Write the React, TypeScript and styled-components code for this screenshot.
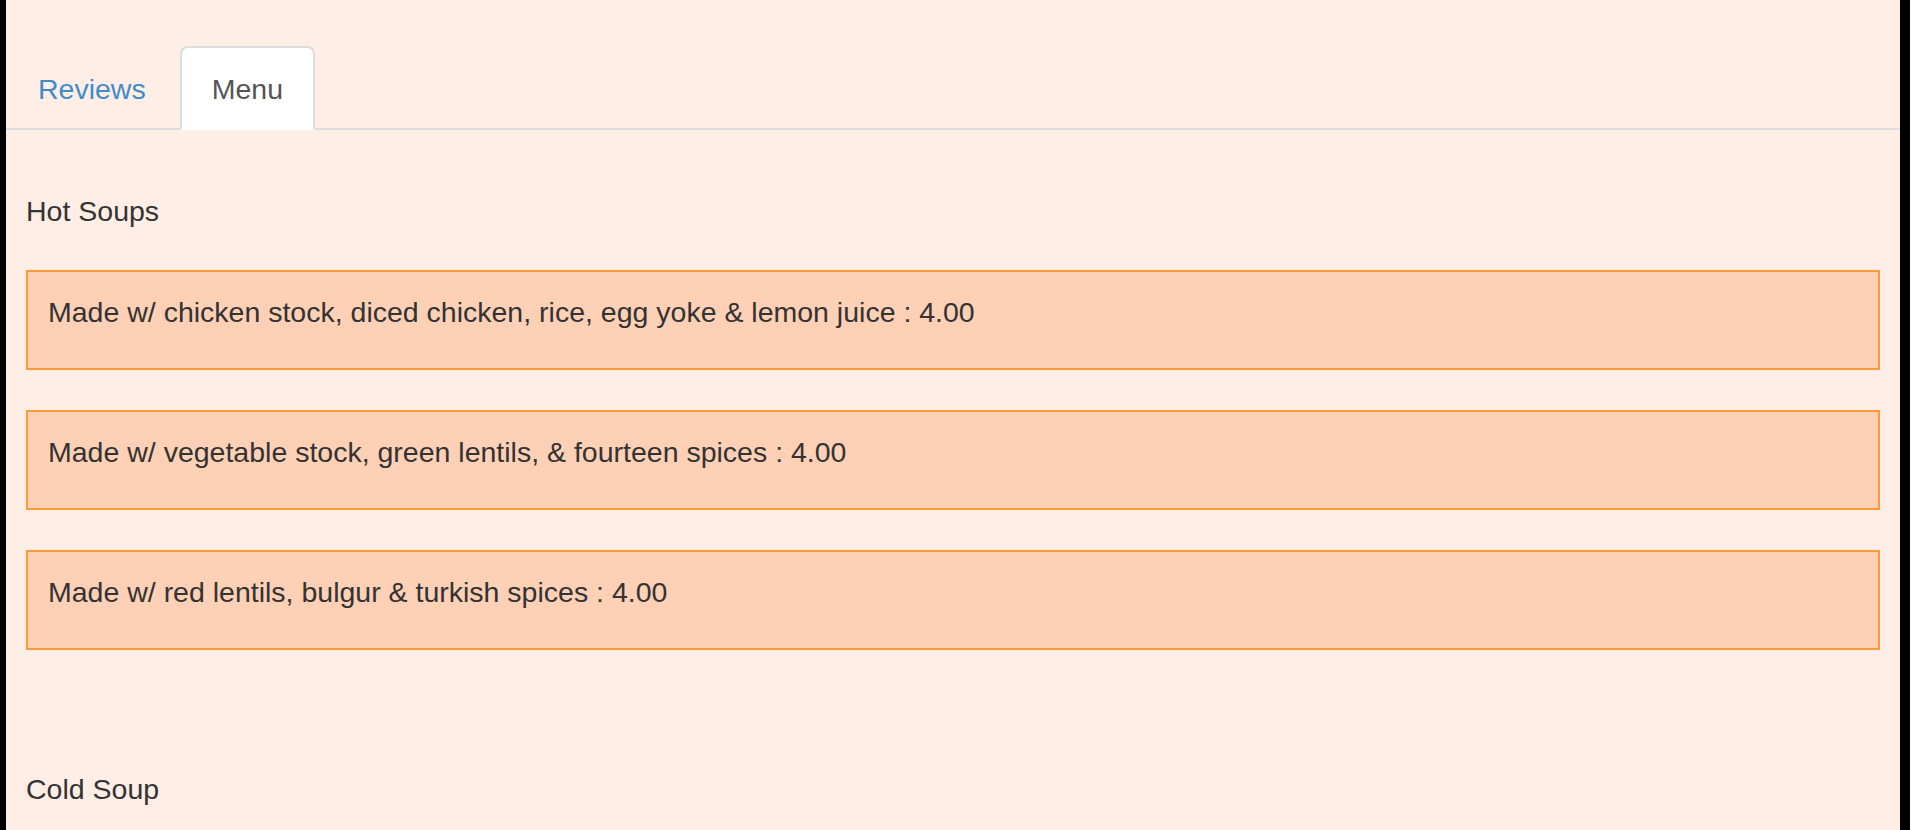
import React from "react";
import styled, { createGlobalStyle } from "styled-components";

const GlobalStyle = createGlobalStyle`
  html, body {
    margin: 0;
    padding: 0;
    height: 100%;
    overflow: hidden;
    background: #ffffff;
  }
  body {
    font-family: "Liberation Sans", Arial, Helvetica, sans-serif;
    font-size: 28.5px;
    line-height: 40px;
    color: #333333;
  }
`;

const Frame = styled.div`
  display: flex;
  height: 100vh;
`;

const Edge = styled.div<{ $w: number; $color: string }>`
  flex: 0 0 ${(p) => p.$w}px;
  background: ${(p) => p.$color};
`;

const Page = styled.div`
  flex: 1;
  background: #ffeee5;
  padding-top: 46px;
  overflow: hidden;
`;

const Tabs = styled.ul`
  display: flex;
  list-style: none;
  margin: 0;
  padding: 0;
  border-bottom: 2px solid #dddddd;
`;

const Tab = styled.li<{ $active?: boolean }>`
  margin: 0 2px -2px 0;
  padding: 21px 30px 19px;
  border: 2px solid ${(p) => (p.$active ? "#dddddd" : "transparent")};
  border-bottom-color: transparent;
  border-radius: 8px 8px 0 0;
  background: ${(p) => (p.$active ? "#ffffff" : "transparent")};
  color: ${(p) => (p.$active ? "#555555" : "#428bca")};
  cursor: pointer;
`;

const Content = styled.div`
  padding: 61px 20px 0;
`;

const Section = styled.section`
  display: flow-root;

  & + & {
    margin-top: 79px;
  }
`;

const SectionTitle = styled.div`
  margin-bottom: 39px;
`;

const Item = styled.div`
  background: #fed0b5;
  border: 2px solid #ff9a36;
  padding: 20px 20px 16px;
  margin-bottom: 40px;

  p {
    margin: 0 0 20px;
  }
`;

const menu = [
  {
    title: "Hot Soups",
    items: [
      "Made w/ chicken stock, diced chicken, rice, egg yoke & lemon juice : 4.00",
      "Made w/ vegetable stock, green lentils, & fourteen spices : 4.00",
      "Made w/ red lentils, bulgur & turkish spices : 4.00",
    ],
  },
  {
    title: "Cold Soup",
    items: [] as string[],
  },
];

export default function App() {
  return (
    <>
      <GlobalStyle />
      <Frame>
        <Edge $w={6} $color="#000000" />
        <Page>
          <Tabs>
            <Tab>Reviews</Tab>
            <Tab $active>Menu</Tab>
          </Tabs>
          <Content>
            {menu.map((section) => (
              <Section key={section.title}>
                <SectionTitle>{section.title}</SectionTitle>
                {section.items.map((item) => (
                  <Item key={item}>
                    <p>{item}</p>
                  </Item>
                ))}
              </Section>
            ))}
          </Content>
        </Page>
        <Edge $w={10} $color="#000000" />
        <Edge $w={10} $color="#ffffff" />
      </Frame>
    </>
  );
}
